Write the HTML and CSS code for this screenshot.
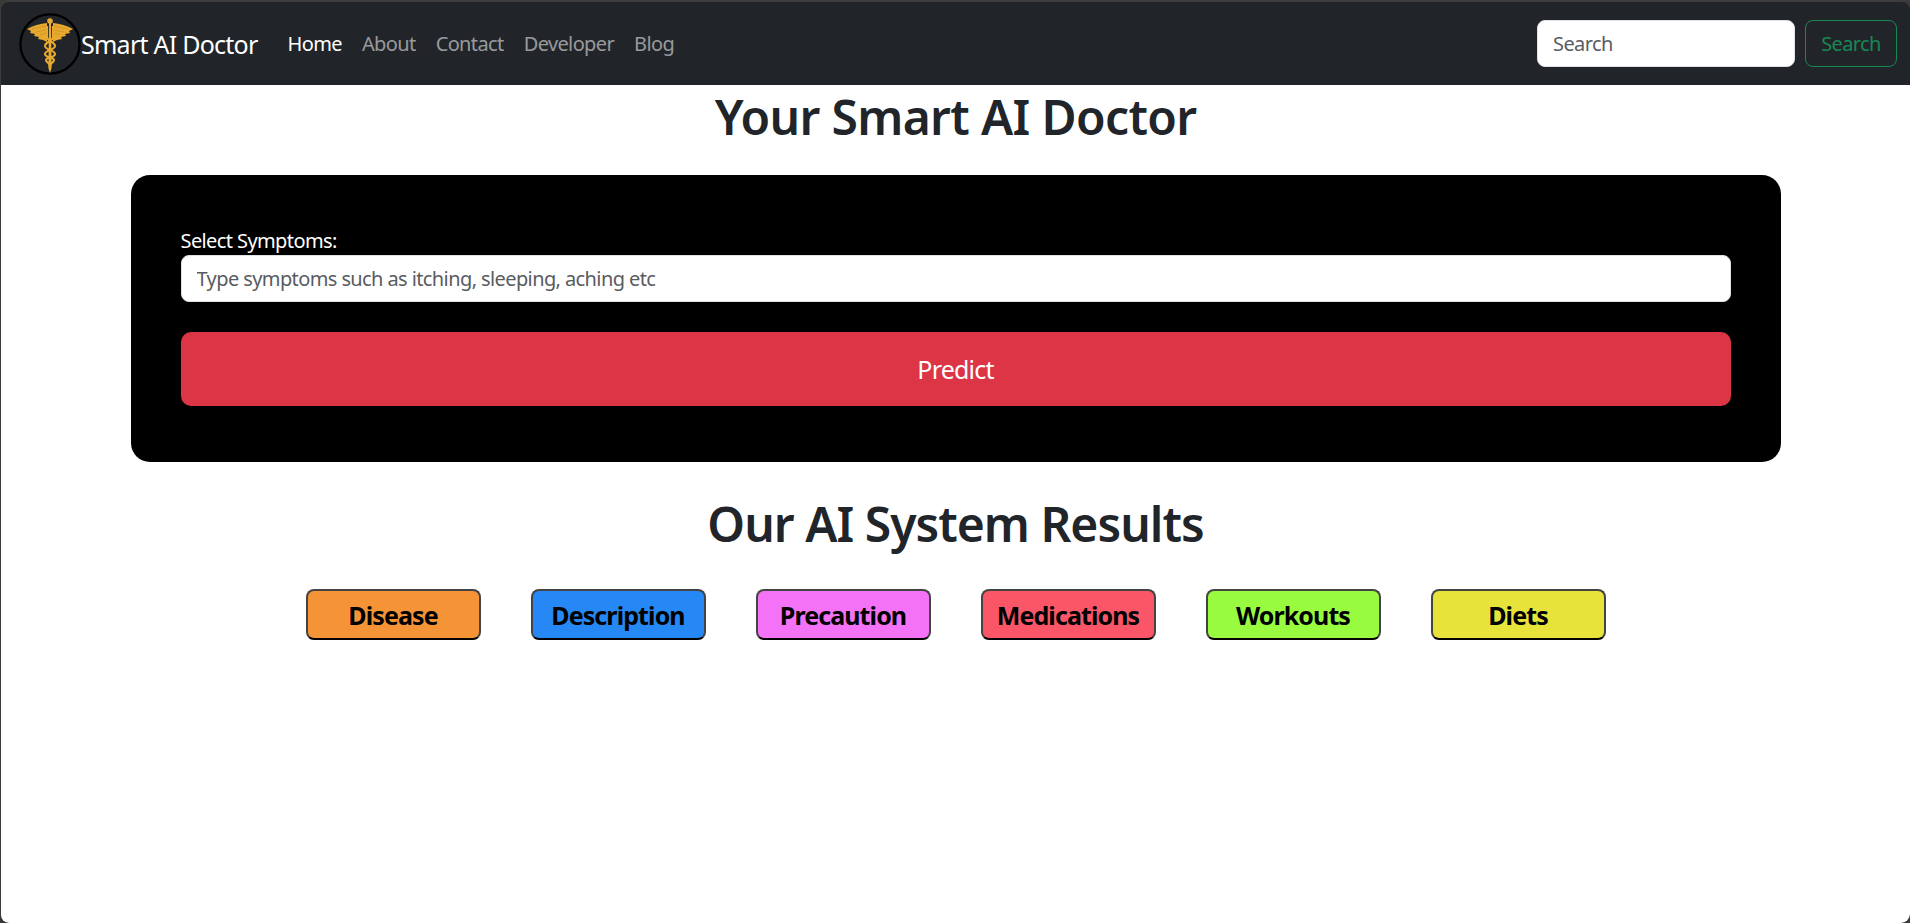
FILE: index.html
```html
<!DOCTYPE html>
<html lang="en">
<head>
<meta charset="utf-8">
<title>Smart AI Doctor</title>
<link rel="stylesheet" href="styles.css">
</head>
<body>
<div class="window">
  <nav class="navbar">
    <a class="brand" href="#">
      <svg class="logo" viewBox="0 0 62 62" aria-hidden="true">
        <circle cx="31" cy="31" r="29.6" fill="none" stroke="#000" stroke-width="2.4"/>
        <path fill="#e8a92f" d="M28 10 C21 10.5 14 13 8 16 L12 18 L11 20 L16 21 L15 23 L20 24 L19 26 L24 27 L28 29Z"/>
        <path fill="#e8a92f" d="M34 10 C41 10.5 48 13 54 16 L50 18 L51 20 L46 21 L47 23 L42 24 L43 26 L38 27 L34 29Z"/>
        <path fill="none" stroke="#a87a20" stroke-width=".4" d="M13 16 L27 13 M17 19 L27 17 M21 22 L27 20 M49 16 L35 13 M45 19 L35 17 M41 22 L35 20"/>
        <circle cx="31" cy="8" r="2.8" fill="#e8a92f"/>
        <path fill="#e8a92f" d="M30 10 H32 L32.6 55 L31 60 L29.4 55Z"/>
        <path fill="none" stroke="#e8a92f" stroke-width="2.1" d="M28 13 V24 C28 28 36 29 36 33 C36 37 26 37 26 41 C26 45 35 44 35 47 C35 50 31 50 30 53 M34 13 V24 C34 28 26 29 26 33 C26 37 36 37 36 41 C36 45 27 44 27 47 C27 50 31 50 32 53"/>
      </svg>
      <span>Smart AI Doctor</span>
    </a>
    <ul class="nav-links">
      <li><a class="nav-link active" href="#">Home</a></li>
      <li><a class="nav-link" href="#">About</a></li>
      <li><a class="nav-link" href="#">Contact</a></li>
      <li><a class="nav-link" href="#">Developer</a></li>
      <li><a class="nav-link" href="#">Blog</a></li>
    </ul>
    <form class="search">
      <input class="search-input" type="text" placeholder="Search">
      <button class="search-btn" type="button">Search</button>
    </form>
  </nav>
  <main class="main">
    <h1 class="title">Your Smart AI Doctor</h1>
    <form class="card">
      <label class="label" for="symptoms">Select Symptoms:</label>
      <input class="symptoms" id="symptoms" type="text" placeholder="Type symptoms such as itching, sleeping, aching etc">
      <button class="predict" type="button">Predict</button>
    </form>
    <h1 class="title results-title">Our AI System Results</h1>
    <div class="results">
      <button class="result disease" type="button">Disease</button>
      <button class="result description" type="button">Description</button>
      <button class="result precaution" type="button">Precaution</button>
      <button class="result medications" type="button">Medications</button>
      <button class="result workouts" type="button">Workouts</button>
      <button class="result diets" type="button">Diets</button>
    </div>
  </main>
</div>
</body>
</html>
```
FILE: styles.css
```css
* { box-sizing: border-box; }
html, body { margin: 0; height: 100%; background: #3a3a3a; }
body { font-family: "Noto Sans", "Open Sans", sans-serif; color: #212529; font-size: 20px; overflow: hidden; }
.window {
  height: 923px;
  padding: 2px 0 0 1px;
  background: #3c3c3c;
  border-radius: 9px;
  overflow: hidden;
  display: flex;
  flex-direction: column;
}
.navbar {
  height: 83px;
  flex: none;
  display: flex;
  align-items: center;
  padding: 0 13px 0 18px;
  background: #212529;
  border-radius: 8px 8px 0 0;
}
.brand { display: flex; align-items: center; color: #fff; text-decoration: none; font-size: 25px; letter-spacing: -.75px; margin-right: 20px; }
.logo { width: 62px; height: 62px; display: block; }
.nav-links { display: flex; list-style: none; margin: 0; padding: 0; }
.nav-link { display: block; padding: 0 10px; color: rgba(255,255,255,.55); text-decoration: none; letter-spacing: -.62px; }
.nav-link.active { color: #fff; }
.search { margin-left: auto; display: flex; gap: 10px; }
.search-input, .symptoms {
  height: 47px;
  background: #fff;
  border: 1px solid #dee2e6;
  border-radius: 8px;
  padding: 0 15px;
  font: inherit;
  letter-spacing: -.6px;
}
.search-input { width: 258px; }
.search-input::placeholder, .symptoms::placeholder { color: #595c5f; opacity: 1; }
.search-btn {
  height: 47px;
  width: 92px;
  padding: 0;
  background: transparent;
  border: 1px solid #198754;
  border-radius: 8px;
  color: #198754;
  font: inherit;
  letter-spacing: -.6px;
}
.main { flex: 1; background: #fff; display: flex; flex-direction: column; align-items: center; border-radius: 0 0 8px 8px; }
.title { margin: 3px 0 0; font-size: 48px; line-height: 58px; font-weight: 600; letter-spacing: -.65px; color: #212529; text-align: center; }
.card {
  width: 1650px;
  margin-top: 29px;
  padding: 51px 50px 56px;
  background: #000;
  border-radius: 19px;
  display: flex;
  flex-direction: column;
}
.label { color: #fff; line-height: 29px; letter-spacing: -.6px; }
.symptoms { width: 100%; flex: none; }
.predict {
  margin-top: 30px;
  height: 74px;
  background: #dc3545;
  color: #fff;
  border: 0;
  border-radius: 10px;
  font: inherit;
  font-size: 25px;
  letter-spacing: -.8px;
}
.results-title { margin-top: 33px; letter-spacing: -.97px; }
.results { display: flex; justify-content: center; gap: 50px; margin-top: 36px; }
.result {
  width: 175px;
  height: 51px;
  padding: 0;
  border: 2px solid #444;
  border-bottom-color: #000;
  border-radius: 8px;
  color: #000;
  font: inherit;
  font-size: 25px;
  font-weight: 700;
  letter-spacing: -.9px;
}
.disease { background: #f59436; }
.description { background: #2688f4; }
.precaution { background: #f372f5; }
.medications { background: #fb5668; }
.workouts { background: #99fb3f; }
.diets { background: #e7e33b; }
```
